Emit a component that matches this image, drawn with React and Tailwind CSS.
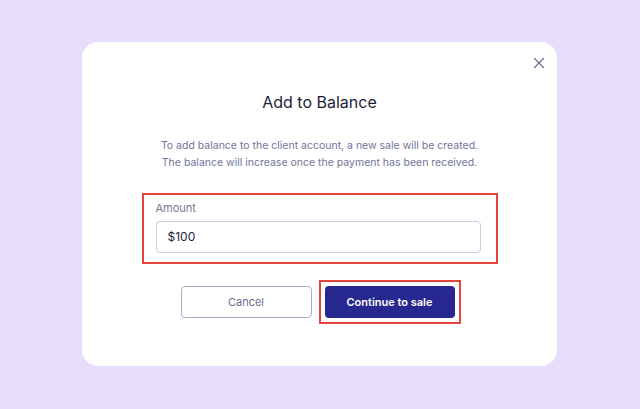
import { X } from 'lucide-react';

export default function App() {
  return (
    <div className="w-[640px] h-[409px] bg-[#e8dcfb] pt-[42px] pl-[82px]" style={{ fontFamily: 'Inter, "Noto Sans", sans-serif' }}>
      <div className="relative w-[475px] h-[324px] bg-white rounded-[16px] flex flex-col items-center">
        <button className="absolute right-[9px] top-[12px] text-[#6b6e8c]">
          <X size={18} strokeWidth={1.6} />
        </button>

        <h1 className="mt-[50px] text-[16px] leading-[20px] text-[#1c1d3a]">Add to Balance</h1>

        <p className="mt-[25px] text-[10.5px] leading-[17px] text-[#70759a] text-center">
          To add balance to the client account, a new sale will be created.
          <br />
          The balance will increase once the payment has been received.
        </p>

        {/* Amount field */}
        <div className="mt-[22px] w-[356px] h-[71px] border-2 border-[#e5443d] px-[12px] pt-[6px]">
          <label className="block text-[11px] leading-[14px] text-[#70759a]">Amount</label>
          <div className="mt-[6px] h-[32px] w-[325px] border border-[#c9cde0] rounded-[4px] flex items-center px-[11px] text-[12px] text-[#1c1d3a]">
            $100
          </div>
        </div>

        {/* Actions */}
        <div className="mt-[16px] flex items-center gap-[7px] ml-[2px]">
          <button className="w-[131px] h-[32px] border border-[#a9adc8] rounded-[4px] text-[11px] text-[#6b6e8c]">
            Cancel
          </button>
          <div className="border-2 border-[#e5443d] p-[4px]">
            <button className="w-[130px] h-[32px] bg-[#26278f] rounded-[4px] text-[11px] font-semibold text-white">
              Continue to sale
            </button>
          </div>
        </div>
      </div>
    </div>
  );
}
